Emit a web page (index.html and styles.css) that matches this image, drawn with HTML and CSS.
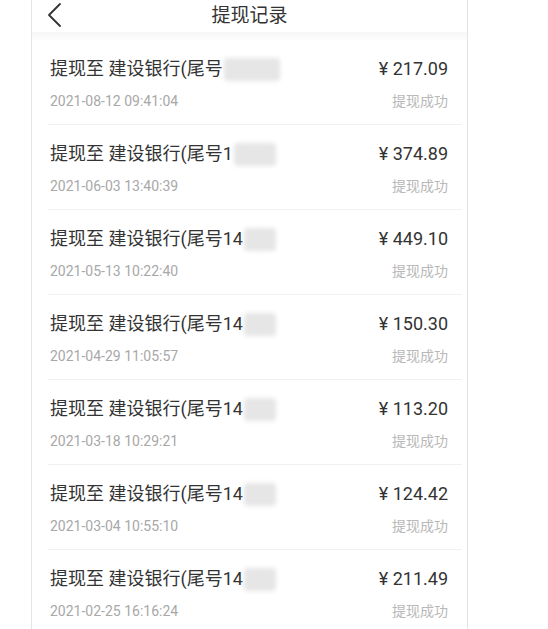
FILE: index.html
```html
<!DOCTYPE html>
<html lang="zh-CN">
<head>
    <meta charset="UTF-8">
    <meta name="viewport" content="width=device-width, initial-scale=1.0">
    <title>提现记录</title>
    <link rel="stylesheet" href="styles.css">
</head>
<body>
    <div class="phone">
        <div class="header">
            <svg class="back" width="18" height="26" viewBox="0 0 18 26">
                <polyline points="14,2 3,13 14,24" fill="none" stroke="#333" stroke-width="1.8" stroke-linecap="round" stroke-linejoin="round"/>
            </svg>
            <div class="title">提现记录</div>
        </div>
        <div class="header-shadow"></div>

        <div class="list">
            <div class="row">
                <div class="line">
                    <span class="bank">提现至 建设银行(尾号<span class="mask w56"></span></span>
                    <span class="amount">¥ 217.09</span>
                </div>
                <div class="line">
                    <span class="date">2021-08-12 09:41:04</span>
                    <span class="status">提现成功</span>
                </div>
            </div>
            <div class="row">
                <div class="line">
                    <span class="bank">提现至 建设银行(尾号1<span class="mask w42"></span></span>
                    <span class="amount">¥ 374.89</span>
                </div>
                <div class="line">
                    <span class="date">2021-06-03 13:40:39</span>
                    <span class="status">提现成功</span>
                </div>
            </div>
            <div class="row">
                <div class="line">
                    <span class="bank">提现至 建设银行(尾号14<span class="mask w32"></span></span>
                    <span class="amount">¥ 449.10</span>
                </div>
                <div class="line">
                    <span class="date">2021-05-13 10:22:40</span>
                    <span class="status">提现成功</span>
                </div>
            </div>
            <div class="row">
                <div class="line">
                    <span class="bank">提现至 建设银行(尾号14<span class="mask w32"></span></span>
                    <span class="amount">¥ 150.30</span>
                </div>
                <div class="line">
                    <span class="date">2021-04-29 11:05:57</span>
                    <span class="status">提现成功</span>
                </div>
            </div>
            <div class="row">
                <div class="line">
                    <span class="bank">提现至 建设银行(尾号14<span class="mask w32"></span></span>
                    <span class="amount">¥ 113.20</span>
                </div>
                <div class="line">
                    <span class="date">2021-03-18 10:29:21</span>
                    <span class="status">提现成功</span>
                </div>
            </div>
            <div class="row">
                <div class="line">
                    <span class="bank">提现至 建设银行(尾号14<span class="mask w32"></span></span>
                    <span class="amount">¥ 124.42</span>
                </div>
                <div class="line">
                    <span class="date">2021-03-04 10:55:10</span>
                    <span class="status">提现成功</span>
                </div>
            </div>
            <div class="row">
                <div class="line">
                    <span class="bank">提现至 建设银行(尾号14<span class="mask w32"></span></span>
                    <span class="amount">¥ 211.49</span>
                </div>
                <div class="line">
                    <span class="date">2021-02-25 16:16:24</span>
                    <span class="status">提现成功</span>
                </div>
            </div>
        </div>
    </div>
</body>
</html>
```

FILE: styles.css
```css
/* Reset */
* {
    margin: 0;
    padding: 0;
    box-sizing: border-box;
}

body {
    background: #ffffff;
    font-family: "Roboto", "Noto Sans CJK SC", sans-serif;
    color: #333333;
}

.phone {
    width: 437px;
    height: 629px;
    margin-left: 31px;
    border-left: 1px solid #e4e4e4;
    border-right: 1px solid #e4e4e4;
    overflow: hidden;
    background: #ffffff;
}

.header {
    display: flex;
    align-items: center;
    justify-content: center;
    height: 32px;
    position: relative;
}

.back {
    position: absolute;
    left: 14px;
    top: 2px;
}

.title {
    font-size: 19px;
    color: #333333;
    line-height: 32px;
}

.header-shadow {
    height: 8px;
    background: linear-gradient(#f6f6f6, #fdfdfd);
}

.row {
    margin: 0 5px 0 16px;
    padding: 17px 14px 15px 2px;
    height: 85px;
    border-bottom: 1px solid #f1f1f1;
    display: flex;
    flex-direction: column;
    gap: 11px;
}

.line {
    display: flex;
    justify-content: space-between;
    align-items: center;
}

.bank {
    font-size: 18px;
    line-height: 24px;
    color: #333333;
    display: flex;
    align-items: center;
}

.mask {
    display: inline-block;
    height: 23px;
    margin-left: 1px;
    background: #e6e6e6;
    filter: blur(2px);
    border-radius: 4px;
}

.w56 { width: 56px; }
.w42 { width: 42px; }
.w32 { width: 32px; }

.amount {
    font-size: 18px;
    line-height: 24px;
    color: #333333;
}

.date {
    font-size: 14px;
    line-height: 18px;
    color: #a8a8a8;
}

.status {
    font-size: 14px;
    line-height: 18px;
    color: #b8b8b8;
}
```
